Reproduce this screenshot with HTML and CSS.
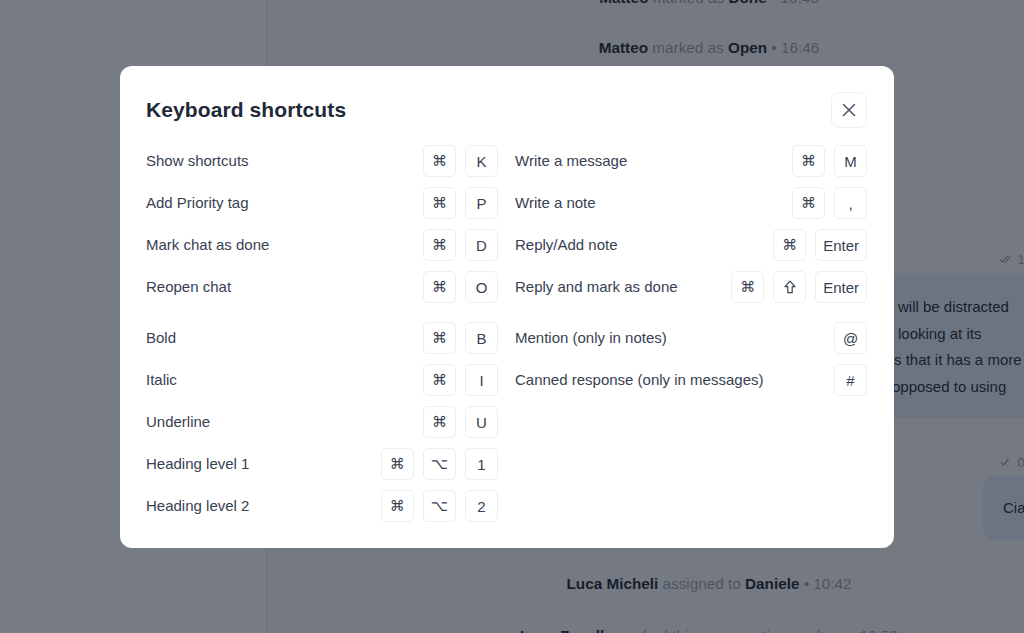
FILE: index.html
```html
<!DOCTYPE html>
<html lang="en">
<head>
<meta charset="utf-8">
<title>Keyboard shortcuts</title>
<link rel="stylesheet" href="styles.css">
</head>
<body>
<div class="app">
  <aside class="sidebar"></aside>
  <main class="chat">
    <div class="event first"><b>Matteo</b> marked as <b>Done</b> • 16:45</div>
    <div class="event second"><b>Matteo</b> marked as <b>Open</b> • 16:46</div>
    <div class="meta meta-1">
      <svg width="14" height="10" viewBox="0 0 14 10"><path d="M1 5.5 L3.5 8 L8.5 2" fill="none" stroke="currentColor" stroke-width="1.2"/><path d="M6 7.5 L6.5 8 L11.5 2" fill="none" stroke="currentColor" stroke-width="1.2"/></svg>
      <span>16:47</span>
    </div>
    <div class="bubble bubble-1">
      <div class="bline">will be distracted</div>
      <div class="bline">looking at its</div>
      <div class="bline l3">s that it has a more</div>
      <div class="bline l4">opposed to using</div>
    </div>
    <div class="meta meta-2">
      <svg width="14" height="10" viewBox="0 0 14 10"><path d="M2 5.5 L4.5 8 L9.5 2" fill="none" stroke="currentColor" stroke-width="1.2"/></svg>
      <span>09:12</span>
    </div>
    <div class="bubble bubble-2">Ciao Luca, grazie!</div>
    <div class="event third"><b>Luca Micheli</b> assigned to <b>Daniele</b> • 10:42</div>
    <div class="event fourth"><b>Luca Zanella</b> marked this conversation as done • 10:52</div>
  </main>
</div>

<div class="overlay">
  <div class="modal" role="dialog">
    <div class="modal-header">
      <h2 class="title">Keyboard shortcuts</h2>
      <button class="close" aria-label="Close">
        <svg width="14" height="14" viewBox="0 0 14 14"><path d="M1.5 1.5 L12.5 12.5 M12.5 1.5 L1.5 12.5" stroke="#4b5563" stroke-width="1.5" stroke-linecap="round"/></svg>
      </button>
    </div>
    <div class="columns">
      <div class="col">
        <div class="group">
          <div class="row"><span class="label">Show shortcuts</span><span class="keys"><kbd class="key">⌘</kbd><kbd class="key">K</kbd></span></div>
          <div class="row"><span class="label">Add Priority tag</span><span class="keys"><kbd class="key">⌘</kbd><kbd class="key">P</kbd></span></div>
          <div class="row"><span class="label">Mark chat as done</span><span class="keys"><kbd class="key">⌘</kbd><kbd class="key">D</kbd></span></div>
          <div class="row"><span class="label">Reopen chat</span><span class="keys"><kbd class="key">⌘</kbd><kbd class="key">O</kbd></span></div>
        </div>
        <div class="group">
          <div class="row"><span class="label">Bold</span><span class="keys"><kbd class="key">⌘</kbd><kbd class="key">B</kbd></span></div>
          <div class="row"><span class="label">Italic</span><span class="keys"><kbd class="key">⌘</kbd><kbd class="key">I</kbd></span></div>
          <div class="row"><span class="label">Underline</span><span class="keys"><kbd class="key">⌘</kbd><kbd class="key">U</kbd></span></div>
          <div class="row"><span class="label">Heading level 1</span><span class="keys"><kbd class="key">⌘</kbd><kbd class="key">⌥</kbd><kbd class="key">1</kbd></span></div>
          <div class="row"><span class="label">Heading level 2</span><span class="keys"><kbd class="key">⌘</kbd><kbd class="key">⌥</kbd><kbd class="key">2</kbd></span></div>
        </div>
      </div>
      <div class="col">
        <div class="group">
          <div class="row"><span class="label">Write a message</span><span class="keys"><kbd class="key">⌘</kbd><kbd class="key">M</kbd></span></div>
          <div class="row"><span class="label">Write a note</span><span class="keys"><kbd class="key">⌘</kbd><kbd class="key">,</kbd></span></div>
          <div class="row"><span class="label">Reply/Add note</span><span class="keys"><kbd class="key">⌘</kbd><kbd class="key">Enter</kbd></span></div>
          <div class="row"><span class="label">Reply and mark as done</span><span class="keys"><kbd class="key">⌘</kbd><kbd class="key" aria-label="Shift"><svg width="12" height="14" viewBox="0 0 12 14"><path d="M6 1.2 L11 6.6 H8.2 V12.6 H3.8 V6.6 H1 Z" fill="none" stroke="#374151" stroke-width="1.2" stroke-linejoin="round"/></svg></kbd><kbd class="key">Enter</kbd></span></div>
        </div>
        <div class="group">
          <div class="row"><span class="label">Mention (only in notes)</span><span class="keys"><kbd class="key">@</kbd></span></div>
          <div class="row"><span class="label">Canned response (only in messages)</span><span class="keys"><kbd class="key">#</kbd></span></div>
        </div>
      </div>
    </div>
  </div>
</div>
</body>
</html>
```

FILE: styles.css
```css
html, body {
  margin: 0;
  padding: 0;
  height: 100%;
  overflow: hidden;
}

body {
  font-family: "Liberation Sans", Arial, "DejaVu Sans", sans-serif;
  font-size: 15px;
  color: #374151;
}

.app {
  display: flex;
  height: 633px;
  overflow: hidden;
  background: #f9fafb;
}

.sidebar {
  width: 266px;
  flex: none;
  background: #ffffff;
  border-right: 1px solid #e5e7eb;
}

.chat {
  flex: 1;
  display: flex;
  flex-direction: column;
  align-items: center;
  padding-left: 127px;
  min-width: 0;
}

.chat > * {
  flex-shrink: 0;
}

.event {
  height: 20px;
  line-height: 20px;
  font-size: 15.3px;
  color: #9ca3af;
  white-space: nowrap;
}

.event b {
  color: #1f2937;
  font-weight: 700;
}

.event.first { margin-top: -12px; }
.event.second { margin-top: 30px; }
.event.third { margin-top: 34px; }
.event.fourth { margin-top: 32px; }

.meta {
  align-self: flex-end;
  display: flex;
  align-items: center;
  gap: 4px;
  height: 18px;
  font-size: 13px;
  color: #9ca3af;
  margin-right: -26px;
}

.meta-1 { margin-top: 192px; }
.meta-2 { margin-top: 35px; }

.bubble {
  align-self: flex-end;
  background: #e5edf9;
  border-radius: 10px;
  color: #1f2937;
  white-space: nowrap;
  box-sizing: border-box;
}

.bubble-1 {
  margin-top: 7px;
  width: 420px;
  height: 143px;
  margin-right: -140px;
  padding: 19px 0 0 154px;
}

.bline {
  line-height: 26.7px;
}

.bline.l3 { margin-left: -4px; }
.bline.l4 { margin-left: -6px; }

.bubble-2 {
  margin-top: 5px;
  width: 200px;
  height: 64px;
  margin-right: -159px;
  padding: 22px 0 0 20px;
  line-height: 20px;
}

/* Overlay + modal */
.overlay {
  position: fixed;
  inset: 0;
  background: rgba(17, 24, 39, 0.57);
  padding: 66px 0 0 120px;
}

.modal {
  width: 774px;
  height: 482px;
  box-sizing: border-box;
  background: #ffffff;
  border-radius: 12px;
  padding: 26px 27px 26px 26px;
}

.modal-header {
  display: flex;
  align-items: center;
  justify-content: space-between;
  height: 36px;
}

.title {
  margin: 0;
  font-size: 21px;
  font-weight: 700;
  color: #1f2937;
  letter-spacing: 0.1px;
}

.close {
  width: 36px;
  height: 36px;
  box-sizing: border-box;
  border: 1px solid #eceef1;
  border-radius: 8px;
  background: #ffffff;
  display: flex;
  align-items: center;
  justify-content: center;
  padding: 0;
  margin: 0;
}

.columns {
  display: grid;
  grid-template-columns: 352px 352px;
  column-gap: 17px;
  margin-top: 17px;
}

.col {
  display: flex;
  flex-direction: column;
  gap: 19px;
}

.group {
  display: flex;
  flex-direction: column;
  gap: 10px;
}

.row {
  display: flex;
  align-items: center;
  justify-content: space-between;
  height: 32px;
}

.label {
  color: #374151;
  white-space: nowrap;
  margin-top: -1px;
}

.keys {
  display: flex;
  gap: 9px;
}

.key {
  min-width: 33px;
  height: 32px;
  box-sizing: border-box;
  padding: 0 7px;
  border: 1px solid #eceef1;
  border-radius: 5px;
  display: flex;
  align-items: center;
  justify-content: center;
  font-family: "Liberation Sans", "DejaVu Sans", sans-serif;
  font-size: 15px;
  color: #374151;
  background: #ffffff;
}
```
